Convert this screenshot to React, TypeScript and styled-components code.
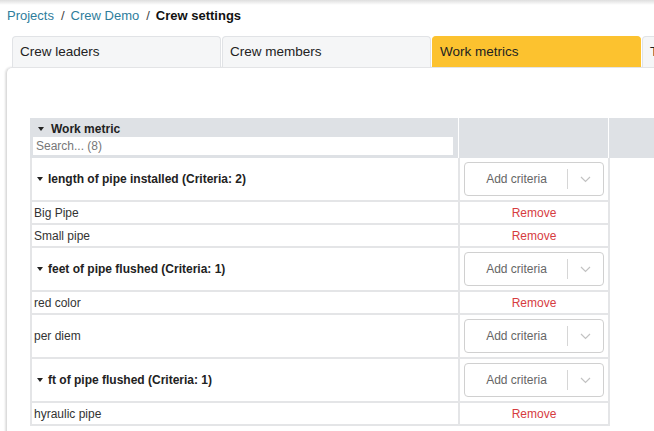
import React from "react";
import styled, { createGlobalStyle } from "styled-components";

const Global = createGlobalStyle`
  html, body { margin: 0; padding: 0; background: #fff; }
  body {
    font-family: "Liberation Sans", Arial, sans-serif;
    width: 654px;
    height: 431px;
    overflow: hidden;
    color: #333;
  }
  * { box-sizing: border-box; }
`;

const Page = styled.div`
  width: 654px;
  height: 431px;
  overflow: hidden;
`;

const TopShadow = styled.div`
  height: 5px;
  background: linear-gradient(to bottom, rgba(0, 0, 0, 0.13), rgba(0, 0, 0, 0));
`;

const Breadcrumb = styled.nav`
  padding: 3px 7px 0;
  font-size: 13px;
  line-height: 15px;
  height: 18px;
  display: flex;
  white-space: nowrap;
`;

const Crumb = styled.a`
  color: #2e7d9c;
  text-decoration: none;
`;

const Sep = styled.span`
  margin: 0 6px 0 7px;
  color: #444;
`;

const Current = styled.span`
  font-weight: bold;
  color: #111;
`;

const TabBar = styled.div`
  margin-top: 13px;
  padding-left: 12px;
  display: flex;
  gap: 1px;
  height: 31px;
  width: 900px;
`;

const Tab = styled.div<{ $active?: boolean }>`
  flex: 0 0 209px;
  height: 31px;
  border: 1px solid ${(p) => (p.$active ? "#fcc22f" : "#e1e3e6")};
  border-bottom: none;
  border-radius: 4px 4px 0 0;
  background: ${(p) => (p.$active ? "#fcc22f" : "#f5f6f7")};
  padding-left: 7px;
  font-size: 13.5px;
  line-height: 29px;
  color: #222;
  white-space: nowrap;
  overflow: hidden;
`;

const Panel = styled.div`
  margin-left: 6px;
  width: 760px;
  height: 400px;
  border-top: 1px solid #e3e4e6;
  border-left: 1px solid #dcdcdc;
  border-top-left-radius: 6px;
  box-shadow: -1px 0 2px rgba(0, 0, 0, 0.12);
  padding: 50px 0 0 23px;
`;

const Header = styled.div`
  display: grid;
  grid-template-columns: 428px 149px 80px;
  column-gap: 1px;
  background: #fff;
  height: 40px;
`;

const HeadCell = styled.div`
  background: #dee1e5;
`;

const HeadMain = styled(HeadCell)`
  padding: 4px 5px 0 3px;
  display: flex;
  flex-direction: column;
  gap: 1px;
`;

const HeadLabel = styled.div`
  display: flex;
  align-items: center;
  gap: 7px;
  padding-left: 5px;
  font-size: 12px;
  line-height: 14px;
  font-weight: bold;
  color: #222;
`;

const Caret = styled.span`
  display: inline-block;
  width: 0;
  height: 0;
  border-left: 3.5px solid transparent;
  border-right: 3.5px solid transparent;
  border-top: 4px solid #222;
`;

const Search = styled.input`
  height: 18px;
  width: 420px;
  border: none;
  outline: none;
  padding: 0 3px;
  font-family: "Liberation Sans", Arial, sans-serif;
  font-size: 12px;
  background: #fff;
  color: #333;
  &::placeholder { color: #777; }
`;

const Row = styled.div<{ $tall?: boolean }>`
  display: grid;
  grid-template-columns: 428px 148px;
  width: 580px;
  border-left: 2px solid #e4e5e7;
  border-right: 2px solid #e4e5e7;
  border-bottom: 2px solid #e4e5e7;
  height: ${(p) => (p.$tall ? 44 : 23)}px;
`;

const NameCell = styled.div<{ $group?: boolean }>`
  border-right: 2px solid #e4e5e7;
  display: flex;
  align-items: center;
  gap: 5px;
  padding-left: ${(p) => (p.$group ? 5 : 2)}px;
  font-size: 12px;
  font-weight: ${(p) => (p.$group ? "bold" : "normal")};
  color: ${(p) => (p.$group ? "#222" : "#333")};
  white-space: nowrap;
`;

const ActionCell = styled.div`
  display: flex;
  align-items: center;
  justify-content: center;
  padding: 0 4px;
`;

const RemoveLink = styled.a`
  color: #d63c3f;
  font-size: 12px;
  text-decoration: none;
  cursor: pointer;
`;

const SplitButton = styled.div`
  width: 140px;
  height: 34px;
  border: 1px solid #d0d0d0;
  border-radius: 4px;
  display: flex;
  align-items: center;
  background: #fff;
`;

const SplitMain = styled.div`
  flex: 1;
  text-align: center;
  font-size: 12px;
  color: #666;
  padding-left: 1px;
`;

const Divider = styled.div`
  width: 1px;
  height: 20px;
  background: #d6d6d6;
`;

const SplitArrow = styled.div`
  width: 35px;
  display: flex;
  align-items: center;
  justify-content: center;
`;

const Chevron = () => (
  <svg width="11" height="7" viewBox="0 0 11 7">
    <polyline points="1,1 5.5,5.5 10,1" fill="none" stroke="#c2c2c2" strokeWidth="1.2" />
  </svg>
);

const AddCriteria = () => (
  <SplitButton>
    <SplitMain>Add criteria</SplitMain>
    <Divider />
    <SplitArrow>
      <Chevron />
    </SplitArrow>
  </SplitButton>
);

type Item =
  | { kind: "group"; name: string; count: number }
  | { kind: "criteria"; name: string }
  | { kind: "empty"; name: string };

const items: Item[] = [
  { kind: "group", name: "length of pipe installed", count: 2 },
  { kind: "criteria", name: "Big Pipe" },
  { kind: "criteria", name: "Small pipe" },
  { kind: "group", name: "feet of pipe flushed", count: 1 },
  { kind: "criteria", name: "red color" },
  { kind: "empty", name: "per diem" },
  { kind: "group", name: "ft of pipe flushed", count: 1 },
  { kind: "criteria", name: "hyraulic pipe" },
];

export default function App() {
  return (
    <Page>
      <Global />
      <TopShadow />
      <Breadcrumb>
        <Crumb>Projects</Crumb>
        <Sep>/</Sep>
        <Crumb>Crew Demo</Crumb>
        <Sep>/</Sep>
        <Current>Crew settings</Current>
      </Breadcrumb>
      <TabBar>
        <Tab>Crew leaders</Tab>
        <Tab>Crew members</Tab>
        <Tab $active>Work metrics</Tab>
        <Tab>Tools</Tab>
      </TabBar>
      <Panel>
        <Header>
          <HeadMain>
            <HeadLabel>
              <Caret />
              Work metric
            </HeadLabel>
            <Search placeholder="Search... (8)" />
          </HeadMain>
          <HeadCell />
          <HeadCell />
        </Header>
        {items.map((it, i) =>
          it.kind === "group" ? (
            <Row key={i} $tall>
              <NameCell $group>
                <Caret />
                {`${it.name} (Criteria: ${it.count})`}
              </NameCell>
              <ActionCell>
                <AddCriteria />
              </ActionCell>
            </Row>
          ) : it.kind === "empty" ? (
            <Row key={i} $tall>
              <NameCell>{it.name}</NameCell>
              <ActionCell>
                <AddCriteria />
              </ActionCell>
            </Row>
          ) : (
            <Row key={i}>
              <NameCell>{it.name}</NameCell>
              <ActionCell>
                <RemoveLink>Remove</RemoveLink>
              </ActionCell>
            </Row>
          )
        )}
      </Panel>
    </Page>
  );
}
